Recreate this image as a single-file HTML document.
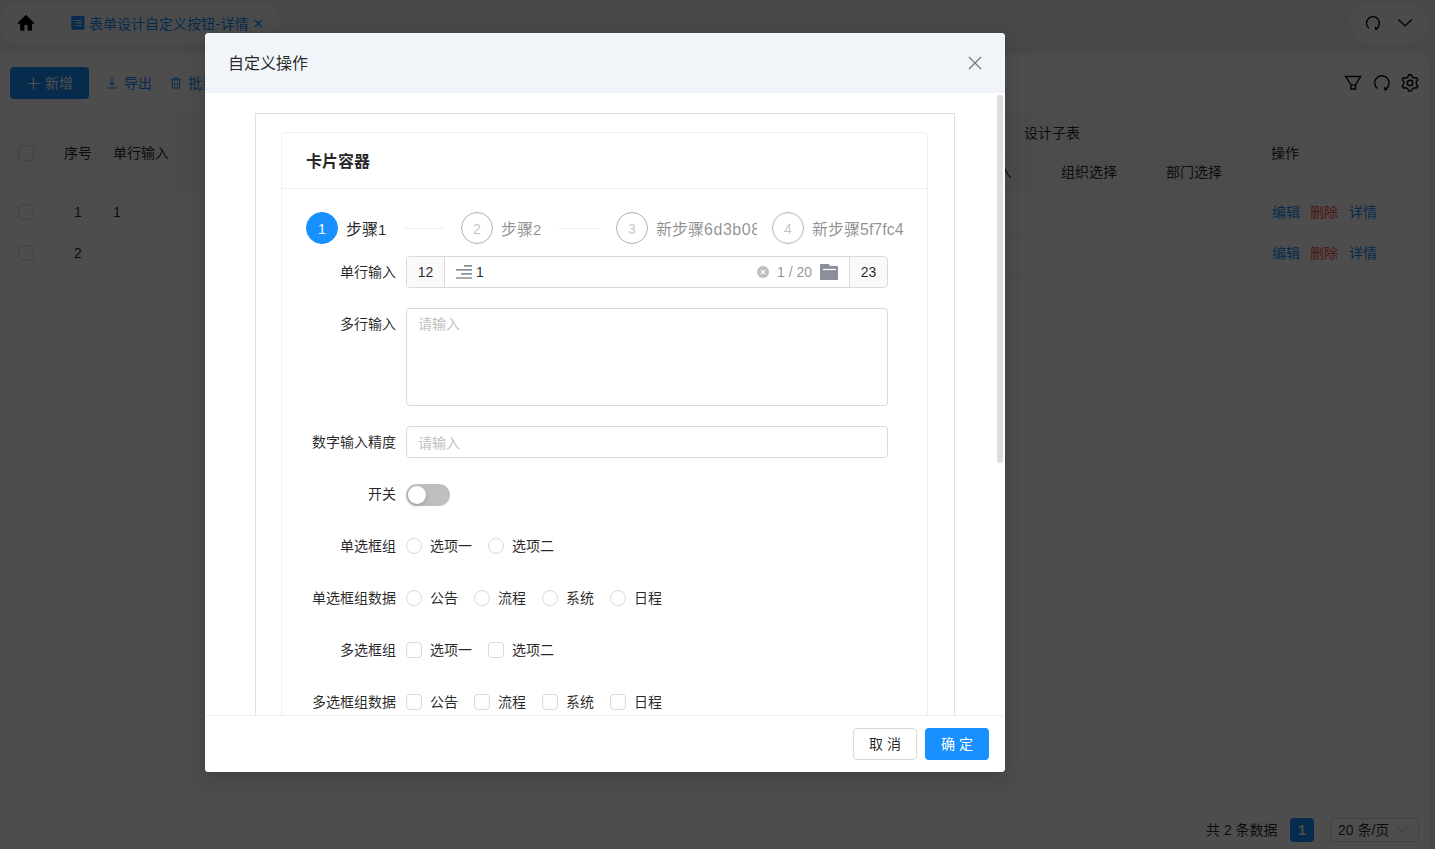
<!DOCTYPE html>
<html lang="zh-CN">
<head>
<meta charset="utf-8">
<title>表单设计自定义按钮-详情</title>
<style>
*{box-sizing:border-box;margin:0;padding:0}
html,body{width:1435px;height:849px;overflow:hidden}
body{font-family:"Liberation Sans","Noto Sans CJK SC",sans-serif;font-size:14px;color:rgba(0,0,0,.85);background:#f0f2f5;position:relative}
.abs{position:absolute}
.t{position:absolute;white-space:nowrap;line-height:20px;height:20px}
/* ---------- background page ---------- */
#page{position:absolute;left:0;top:0;width:1435px;height:849px;background:#e8edf5}
.pill{position:absolute;background:#f7f8fa;border-radius:20px}
#content{position:absolute;left:0;top:53px;width:1429px;height:810px;background:#fff;border-radius:8px}
.btn-primary{position:absolute;background:#1890ff;color:#fff;border-radius:4px;text-align:center}
.link{color:#1890ff}
.th{position:absolute;background:#fafafa;border-right:1px solid #f0f0f0;border-bottom:1px solid #f0f0f0}
.td{position:absolute;border-right:1px solid #f0f0f0;border-bottom:1px solid #f0f0f0}
.cb{position:absolute;width:16px;height:16px;border:1px solid #d9d9d9;border-radius:4px;background:#fff}
.rd{position:absolute;width:16px;height:16px;border:1px solid #d9d9d9;border-radius:50%;background:#fff}
#mask{position:absolute;left:0;top:0;width:1435px;height:849px;background:rgba(0,0,0,.6975)}
/* ---------- modal ---------- */
#modal{position:absolute;left:205px;top:33px;width:800px;height:739px;background:#fff;border-radius:4px;overflow:hidden;box-shadow:0 3px 6px -4px rgba(0,0,0,.12),0 6px 16px rgba(0,0,0,.08),0 9px 28px 8px rgba(0,0,0,.05)}
#mhead{position:absolute;left:0;top:0;width:800px;height:60px;background:#f1f4f9}
#mbody{position:absolute;left:0;top:60px;width:800px;height:622px;overflow:hidden}
#mfoot{position:absolute;left:0;top:682px;width:800px;height:57px;border-top:1px solid #f0f0f0;background:#fff}
.lbl{position:absolute;white-space:nowrap;line-height:20px;height:20px;text-align:right;width:120px;left:71px}
.inp{position:absolute;border:1px solid #d9d9d9;border-radius:4px;background:#fff}
.ph{color:#bfbfbf}
.step-c{position:absolute;width:32px;height:32px;border-radius:50%;border:1px solid rgba(0,0,0,.3);text-align:center;line-height:33px;font-size:14px;color:rgba(0,0,0,.25)}
.step-t{position:absolute;font-size:16px;line-height:32px;height:34px;padding-top:2px;white-space:nowrap;color:rgba(0,0,0,.45);overflow:hidden}
.step-l{position:absolute;height:1px;background:#f0f0f0}
</style>
</head>
<body>
<div id="page">
  <!-- top tabs -->
  <div class="pill" style="left:0;top:3px;width:280px;height:41px"></div>
  <svg class="abs" style="left:16px;top:13px" width="20" height="20" viewBox="16 13 20 20"><path d="M25.900 14.700L34.300 22.900Q34.600 23.700 33.800 23.700H32V29.800Q32 30.800 31 30.800H27.600V25.400Q26 24 24.400 25.400V30.800H21.100Q20.100 30.800 20.100 29.800V23.700H18.100Q17.300 23.700 17.600 22.900Z" fill="#050505"/></svg>
  <svg class="abs" style="left:71px;top:16px" width="14" height="14" viewBox="0 0 14 14"><rect x="0.300" y="0" width="13.200" height="13.800" rx="1" fill="#1890ff"/><path d="M3 4.500h1M5.200 4.500h5.600M3 6.900h1M5.200 6.900h5.600M3 9.600h1M5.200 9.600h5.600" stroke="#fff" stroke-width="1"/></svg>
  <div class="t link" style="left:89px;top:14px">表单设计自定义按钮<span style="margin:0 .6px">-</span>详情</div>
  <div class="t link" style="left:253px;top:14px;font-size:17px">×</div>
  <div class="pill" style="left:1350px;top:3px;width:78px;height:40px"></div>
  <svg class="abs" style="left:1363px;top:13px" width="20" height="20" viewBox="0 0 20 20" fill="none" stroke="#000" stroke-width="1.35"><path d="M5.98 15.18 A6.45 6.45 0 1 1 12.98 15.80"/><path d="M12.25 13.30 L15.15 16.50 L11.75 16.90Z" fill="#000" stroke="none"/></svg>
  <svg class="abs" style="left:1396px;top:16px" width="18" height="14" viewBox="0 0 18 14" fill="none" stroke="#000" stroke-width="1.4"><path d="M2.300 3.500L9.050 9.900L15.800 3.500"/></svg>

  <div id="content">
    <!-- toolbar -->
    <div class="btn-primary" style="left:10px;top:14px;width:79px;height:32px"></div>
    <svg class="abs" style="left:27px;top:24px" width="13" height="13" viewBox="0 0 13 13" stroke="#fff" stroke-width="1.2"><path d="M6.5 0.5V12.5M0.5 6.5H12.5"/></svg>
    <div class="t" style="left:45px;top:20px;color:#fff">新增</div>
    <svg class="abs" style="left:106px;top:24px" width="12" height="12" viewBox="0 0 12 12" fill="none" stroke="#1890ff" stroke-width="1.1"><path d="M6 0.5V8M3.2 5.4L6 8.2L8.8 5.4M0.5 11H11.5"/></svg>
    <div class="t link" style="left:124px;top:20px">导出</div>
    <svg class="abs" style="left:170px;top:24px" width="12" height="12" viewBox="0 0 12 12" fill="none" stroke="#1890ff" stroke-width="1"><path d="M1 2.8H11M4 2.8V1H8V2.8M2.2 2.8L2.8 11H9.2L9.8 2.8M4.8 5V9M7.2 5V9"/></svg>
    <div class="t link" style="left:188px;top:20px">批量删除</div>
    <!-- right icons -->
    <svg class="abs" style="left:1343px;top:19px" width="20" height="20" viewBox="0 0 20 20" fill="none" stroke="#000" stroke-width="1.4" stroke-linejoin="miter"><path d="M2.600 4.550H17.700L12.500 12.600V17H7.900V12.600Z"/><path d="M7.900 12.900H12.500" stroke-width="1"/></svg>
    <svg class="abs" style="left:1371px;top:19px" width="22" height="22" viewBox="0 0 22 22" fill="none" stroke="#000" stroke-width="1.40"><path d="M6.47 16.57 A7.20 7.20 0 1 1 14.28 17.26"/><path d="M13.47 14.47 L16.70 18.04 L12.91 18.49Z" fill="#000" stroke="none"/></svg>
    <svg class="abs" style="left:1400px;top:20px" width="20" height="20" viewBox="0 0 20 20" fill="none" stroke="#000" stroke-width="1.4" stroke-linejoin="round"><circle cx="10.05" cy="9.9" r="2.7"/><path d="M7.79 4.02 L8.75 1.70 L11.35 1.70 L12.31 4.02 L14.01 5.00 L16.50 4.68 L17.80 6.93 L16.27 8.91 L16.27 10.89 L17.80 12.87 L16.50 15.12 L14.01 14.80 L12.31 15.78 L11.35 18.10 L8.75 18.10 L7.79 15.78 L6.09 14.80 L3.60 15.12 L2.30 12.87 L3.83 10.89 L3.83 8.91 L2.30 6.93 L3.60 4.68 L6.09 5.00Z"/></svg>

    <!-- table header -->
    <div class="th" style="left:0;top:60px;width:52px;height:79px;border-top:1px solid #f0f0f0;border-left:1px solid #f0f0f0"></div>
    <div class="th" style="left:52px;top:60px;width:52px;height:79px;border-top:1px solid #f0f0f0"></div>
    <div class="th" style="left:104px;top:60px;width:900px;height:79px;border-top:1px solid #f0f0f0;border-right:none"></div>
    <div class="th" style="left:1004px;top:60px;width:259px;height:40px;border-top:1px solid #f0f0f0"></div>
    <div class="th" style="left:1004px;top:100px;width:49px;height:39px"></div>
    <div class="th" style="left:1053px;top:100px;width:105px;height:39px"></div>
    <div class="th" style="left:1158px;top:100px;width:105px;height:39px"></div>
    <div class="th" style="left:1263px;top:60px;width:159px;height:79px;border-top:1px solid #f0f0f0"></div>
    <div class="cb" style="left:18px;top:92px"></div>
    <div class="t" style="left:64px;top:90px">序号</div>
    <div class="t" style="left:113px;top:90px">单行输入</div>
    <div class="t" style="left:1024px;top:70px">设计子表</div>
    <div class="t" style="left:984px;top:109px">输入</div>
    <div class="t" style="left:1061px;top:109px">组织选择</div>
    <div class="t" style="left:1166px;top:109px">部门选择</div>
    <div class="t" style="left:1271px;top:90px">操作</div>
    <div class="abs" style="left:0;top:60px;width:1px;height:695px;background:#f0f0f0"></div>
    <!-- rows -->
    <div class="td" style="left:0;top:139px;width:52px;height:41px;border-left:1px solid #f0f0f0"></div>
    <div class="td" style="left:52px;top:139px;width:52px;height:41px"></div>
    <div class="td" style="left:104px;top:139px;width:1159px;height:41px"></div>
    <div class="td" style="left:1263px;top:139px;width:159px;height:41px"></div>
    <div class="td" style="left:0;top:180px;width:52px;height:41px;border-left:1px solid #f0f0f0"></div>
    <div class="td" style="left:52px;top:180px;width:52px;height:41px"></div>
    <div class="td" style="left:104px;top:180px;width:1159px;height:41px"></div>
    <div class="td" style="left:1263px;top:180px;width:159px;height:41px"></div>
    <div class="cb" style="left:18px;top:151px"></div>
    <div class="cb" style="left:18px;top:192px"></div>
    <div class="t" style="left:52px;width:52px;text-align:center;top:149px">1</div>
    <div class="t" style="left:52px;width:52px;text-align:center;top:190px">2</div>
    <div class="t" style="left:113px;top:149px">1</div>
    <div class="t link" style="left:1272px;top:149px">编辑</div>
    <div class="t" style="left:1310px;top:149px;color:#ff4d4f">删除</div>
    <div class="t link" style="left:1349px;top:149px">详情</div>
    <div class="t link" style="left:1272px;top:190px">编辑</div>
    <div class="t" style="left:1310px;top:190px;color:#ff4d4f">删除</div>
    <div class="t link" style="left:1349px;top:190px">详情</div>
  </div>
  <!-- pagination -->
  <div class="t" style="left:1206px;top:820px">共 2 条数据</div>
  <div class="btn-primary" style="left:1290px;top:818px;width:24px;height:24px;line-height:24px;font-weight:bold">1</div>
  <div class="abs" style="left:1330px;top:818px;width:89px;height:24px;border:1px solid #d9d9d9;border-radius:4px;background:#fff"></div>
  <div class="t" style="left:1338px;top:820px">20 条/页</div>
  <svg class="abs" style="left:1397px;top:826px" width="12" height="8" viewBox="0 0 12 8" fill="none" stroke="#c8c8c8" stroke-width="1.1"><path d="M1 1L5.500 6L10 1"/></svg>
</div>
<div id="mask"></div>

<div id="modal">
  <div id="mhead">
    <div class="t" style="left:23px;top:20px;font-size:16px;line-height:22px;height:22px;color:rgba(0,0,0,.85)">自定义操作</div>
    <svg class="abs" style="left:763px;top:23px" width="14" height="14" viewBox="0 0 14 14" fill="none" stroke="#777" stroke-width="1.2"><path d="M1 1L13 13M13 1L1 13"/></svg>
  </div>
  <div id="mbody">
    <div class="abs" style="left:792px;top:2px;width:6px;height:368px;background:#dddee0;border-radius:3px"></div>
    <div class="abs" style="left:50px;top:20px;width:700px;height:700px;border:1px solid #e0e0e0"></div>
    <div class="abs" style="left:76px;top:39px;width:647px;height:700px;border:1px solid #f0f0f0;border-radius:4px"></div>
    <div class="abs" style="left:76px;top:95px;width:647px;height:1px;background:#f0f0f0"></div>
    <div class="t" style="left:101px;top:57px;font-size:16px;font-weight:bold;line-height:24px;height:24px">卡片容器</div>
    <!-- steps -->
    <div class="step-c" style="left:101px;top:119px;background:#1890ff;border-color:#1890ff;color:#fff">1</div>
    <div class="step-t" style="left:141px;top:119px;color:rgba(0,0,0,.85)">步骤<span style="font-size:15px">1</span></div>
    <div class="step-l" style="left:198px;top:135px;width:41px"></div>
    <div class="step-c" style="left:256px;top:119px">2</div>
    <div class="step-t" style="left:296px;top:119px">步骤<span style="font-size:15px">2</span></div>
    <div class="step-l" style="left:353px;top:135px;width:42px"></div>
    <div class="step-c" style="left:411px;top:119px">3</div>
    <div class="step-t" style="left:451px;top:119px;width:101px">新步骤<span style="letter-spacing:.55px">6d3b08</span></div>
    <div class="step-c" style="left:567px;top:119px">4</div>
    <div class="step-t" style="left:607px;top:119px">新步骤5f7fc4</div>
    <!-- row1 -->
    <div class="lbl" style="top:169px">单行输入</div>
    <div class="inp" style="left:201px;top:163px;width:482px;height:32px"></div>
    <div class="abs" style="left:202px;top:164px;width:38px;height:30px;background:#fafafa;border-right:1px solid #d9d9d9;border-radius:3px 0 0 3px;text-align:center;line-height:30px">12</div>
    <div class="abs" style="left:644px;top:164px;width:38px;height:30px;background:#fafafa;border-left:1px solid #d9d9d9;border-radius:0 3px 3px 0;text-align:center;line-height:30px">23</div>
    <svg class="abs" style="left:251px;top:171px" width="17" height="16" viewBox="0 0 17 16" fill="none" stroke="#8c8f99" stroke-width="1.7"><path d="M8.1 1.800H16M0 5.900H16M5.100 9.900H16M0 14H16"/></svg>
    <div class="t" style="left:271px;top:169px">1</div>
    <div class="abs" style="left:552px;top:173px;width:12px;height:12px;border-radius:50%;background:#bfbfbf"></div>
    <svg class="abs" style="left:555px;top:176px" width="6" height="6" viewBox="0 0 6 6" stroke="#fff" stroke-width="1.2"><path d="M0.8 0.8L5.2 5.2M5.2 0.8L0.8 5.2"/></svg>
    <div class="t" style="left:572px;top:169px;color:rgba(0,0,0,.45)">1 / 20</div>
    <svg class="abs" style="left:615px;top:171px" width="18" height="16" viewBox="0 0 18 16"><path d="M0 0.800Q0 0 0.800 0H8.500L10.500 2H17.200Q18 2 18 2.800V15.200Q18 16 17.200 16H0.800Q0 16 0 15.200Z" fill="#8c8f99"/><path d="M3 5.500H16" stroke="#fff" stroke-width="1.200"/></svg>
    <!-- row2 -->
    <div class="lbl" style="top:221px">多行输入</div>
    <div class="inp" style="left:201px;top:215px;width:482px;height:98px"></div>
    <div class="t ph" style="left:213px;top:221px">请输入</div>
    <!-- row3 -->
    <div class="lbl" style="top:339px">数字输入精度</div>
    <div class="inp" style="left:201px;top:333px;width:482px;height:32px"></div>
    <div class="t ph" style="left:213px;top:340px">请输入</div>
    <!-- row4 -->
    <div class="lbl" style="top:391px">开关</div>
    <div class="abs" style="left:201px;top:391px;width:44px;height:22px;border-radius:11px;background:#bfbfbf"></div>
    <div class="abs" style="left:203px;top:393px;width:18px;height:18px;border-radius:9px;background:#fff;box-shadow:0 2px 4px rgba(0,35,11,.2)"></div>
    <!-- row5 -->
    <div class="lbl" style="top:443px">单选框组</div>
    <div class="rd" style="left:201px;top:445px"></div><div class="t" style="left:225px;top:443px">选项一</div>
    <div class="rd" style="left:283px;top:445px"></div><div class="t" style="left:307px;top:443px">选项二</div>
    <!-- row6 -->
    <div class="lbl" style="top:495px">单选框组数据</div>
    <div class="rd" style="left:201px;top:497px"></div><div class="t" style="left:225px;top:495px">公告</div>
    <div class="rd" style="left:269px;top:497px"></div><div class="t" style="left:293px;top:495px">流程</div>
    <div class="rd" style="left:337px;top:497px"></div><div class="t" style="left:361px;top:495px">系统</div>
    <div class="rd" style="left:405px;top:497px"></div><div class="t" style="left:429px;top:495px">日程</div>
    <!-- row7 -->
    <div class="lbl" style="top:547px">多选框组</div>
    <div class="cb" style="left:201px;top:549px"></div><div class="t" style="left:225px;top:547px">选项一</div>
    <div class="cb" style="left:283px;top:549px"></div><div class="t" style="left:307px;top:547px">选项二</div>
    <!-- row8 -->
    <div class="lbl" style="top:599px">多选框组数据</div>
    <div class="cb" style="left:201px;top:601px"></div><div class="t" style="left:225px;top:599px">公告</div>
    <div class="cb" style="left:269px;top:601px"></div><div class="t" style="left:293px;top:599px">流程</div>
    <div class="cb" style="left:337px;top:601px"></div><div class="t" style="left:361px;top:599px">系统</div>
    <div class="cb" style="left:405px;top:601px"></div><div class="t" style="left:429px;top:599px">日程</div>
  </div>
  <div id="mfoot">
    <div class="abs" style="left:648px;top:12px;width:64px;height:32px;border:1px solid #d9d9d9;border-radius:4px;background:#fff;text-align:center;line-height:30px">取 消</div>
    <div class="abs" style="left:720px;top:12px;width:64px;height:32px;border-radius:4px;background:#1890ff;color:#fff;text-align:center;line-height:32px">确 定</div>
  </div>
</div>
</body>
</html>
